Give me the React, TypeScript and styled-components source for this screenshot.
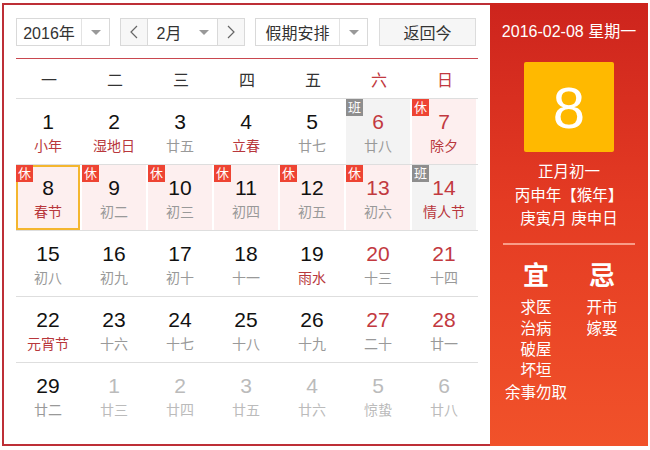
import styled, { createGlobalStyle } from "styled-components";

const GlobalStyle = createGlobalStyle`
    html, body {
        margin: 0;
        padding: 0;
        background: #fff;
        font-family: "Liberation Sans", "Noto Sans CJK SC", sans-serif;
    }
`;

const Frame = styled.div`
    margin: 3px 0 0 2px;
    width: 646px;
    height: 443px;
    box-sizing: border-box;
    border: 2px solid #bd2f36;
    border-right: none;
    display: flex;
`;

const Main = styled.div`
    width: 486px;
    box-sizing: border-box;
    padding: 13px 13px 0 12px;
`;

const Toolbar = styled.div`
    display: flex;
    height: 28px;
    gap: 10px;
    margin-bottom: 12px;
`;

const SelectBox = styled.div<{ $w: number }>`
    width: ${(p) => p.$w}px;
    height: 28px;
    box-sizing: border-box;
    border: 1px solid #d9d9d9;
    background: #fff;
    display: flex;
    align-items: center;
    font-size: 16px;
    color: #333;
`;

const SelectText = styled.div`
    flex: 1;
    text-align: center;
`;

const ArrowPart = styled.div<{ $plain?: boolean }>`
    width: 27px;
    height: 100%;
    border-left: ${(p) => (p.$plain ? "none" : "1px solid #e3e3e3")};
    display: flex;
    align-items: center;
    justify-content: center;
    &::after {
        content: "";
        border-left: 5px solid transparent;
        border-right: 5px solid transparent;
        border-top: 5px solid #999;
    }
`;

const MonthGroup = styled.div`
    display: flex;
    width: 125px;
    height: 28px;
    box-sizing: border-box;
    border: 1px solid #d9d9d9;
`;

const StepBtn = styled.div`
    width: 26px;
    background: #f7f7f7;
    display: flex;
    align-items: center;
    justify-content: center;
    border-color: #d9d9d9;
    border-style: solid;
    border-width: 0;
    &:first-child { border-right-width: 1px; }
    &:last-child { border-left-width: 1px; }
`;

const MonthPart = styled.div`
    flex: 1;
    display: flex;
    align-items: center;
    font-size: 16px;
    color: #333;
`;

const TodayBtn = styled.div`
    margin-left: 1px;
    width: 97px;
    height: 28px;
    box-sizing: border-box;
    border: 1px solid #dcdcdc;
    background: #f6f6f6;
    display: flex;
    align-items: center;
    justify-content: center;
    font-size: 16px;
    color: #333;
`;

const Table = styled.div`
    width: 462px;
    border-top: 1px solid #c9474f;
`;

const WeekRow = styled.div`
    display: grid;
    grid-template-columns: repeat(7, 66px);
    height: 39px;
    border-bottom: 1px solid #dedede;
`;

const WeekCell = styled.div<{ $weekend?: boolean }>`
    display: flex;
    align-items: center;
    justify-content: center;
    font-size: 16px;
    color: ${(p) => (p.$weekend ? "#c2393f" : "#333")};
`;

const Row = styled.div<{ $last?: boolean }>`
    display: grid;
    grid-template-columns: repeat(7, 66px);
    height: 65px;
    border-bottom: 1px solid ${(p) => (p.$last ? "transparent" : "#dedede")};
`;

type Kind = "normal" | "rest" | "work";

const Cell = styled.div<{ $kind: Kind; $selected?: boolean }>`
    position: relative;
    box-sizing: border-box;
    margin-right: 2px;
    padding-top: ${(p) => (p.$selected ? 9 : 11)}px;
    text-align: center;
    background: ${(p) =>
        p.$kind === "rest" ? "#fdefef" : p.$kind === "work" ? "#f3f3f3" : "#fff"};
    border: ${(p) => (p.$selected ? "2px solid #f4b62f" : "none")};
`;

const DayNum = styled.div<{ $color: string }>`
    font-size: 21px;
    line-height: 24px;
    color: ${(p) => p.$color};
`;

const Lunar = styled.div<{ $color: string }>`
    font-size: 14px;
    line-height: 24px;
    color: ${(p) => p.$color};
`;

const Badge = styled.span<{ $work?: boolean; $inSelected?: boolean }>`
    position: absolute;
    top: ${(p) => (p.$inSelected ? -2 : 0)}px;
    left: ${(p) => (p.$inSelected ? -2 : 0)}px;
    width: 17px;
    height: 17px;
    line-height: 17px;
    font-size: 13px;
    text-align: center;
    color: #fff;
    background: ${(p) => (p.$work ? "#8e8e8e" : "#ee4433")};
`;

const Side = styled.div`
    width: 158px;
    margin-top: -2px;
    margin-bottom: -2px;
    background: linear-gradient(180deg, #cd241d 0%, #e43b23 45%, #f1522a 100%);
    color: #fff;
    display: flex;
    flex-direction: column;
    align-items: center;
`;

const SideDate = styled.div`
    margin-top: 19px;
    font-size: 16px;
    line-height: 20px;
    white-space: nowrap;
`;

const BigDay = styled.div`
    margin-top: 20px;
    width: 90px;
    height: 90px;
    border-radius: 2px;
    background: #ffb900;
    display: flex;
    align-items: center;
    justify-content: center;
    font-size: 58px;
`;

const LunarInfo = styled.div`
    margin-top: 8px;
    font-size: 15.5px;
    line-height: 23.5px;
    text-align: center;
    white-space: nowrap;
`;

const Divider = styled.div`
    margin-top: 12px;
    width: 132px;
    height: 2px;
    background: rgba(255, 190, 170, 0.75);
`;

const Almanac = styled.div`
    margin-top: 14px;
    width: 132px;
    display: grid;
    grid-template-columns: 1fr 1fr;
`;

const AlmanacCol = styled.div`
    display: flex;
    flex-direction: column;
    align-items: center;
`;

const AlmanacHead = styled.div`
    font-size: 26px;
    line-height: 34px;
    font-weight: bold;
    margin-bottom: 4px;
`;

const AlmanacItem = styled.div`
    font-size: 15.5px;
    line-height: 21.3px;
    white-space: nowrap;
`;

type Day = {
    n: number;
    l: string;
    fest?: boolean;
    badge?: "rest" | "work";
    other?: boolean;
    sel?: boolean;
};

const weeks: Day[][] = [
    [
        { n: 1, l: "小年", fest: true },
        { n: 2, l: "湿地日", fest: true },
        { n: 3, l: "廿五" },
        { n: 4, l: "立春", fest: true },
        { n: 5, l: "廿七" },
        { n: 6, l: "廿八", badge: "work" },
        { n: 7, l: "除夕", fest: true, badge: "rest" },
    ],
    [
        { n: 8, l: "春节", fest: true, badge: "rest", sel: true },
        { n: 9, l: "初二", badge: "rest" },
        { n: 10, l: "初三", badge: "rest" },
        { n: 11, l: "初四", badge: "rest" },
        { n: 12, l: "初五", badge: "rest" },
        { n: 13, l: "初六", badge: "rest" },
        { n: 14, l: "情人节", fest: true, badge: "work" },
    ],
    [
        { n: 15, l: "初八" },
        { n: 16, l: "初九" },
        { n: 17, l: "初十" },
        { n: 18, l: "十一" },
        { n: 19, l: "雨水", fest: true },
        { n: 20, l: "十三" },
        { n: 21, l: "十四" },
    ],
    [
        { n: 22, l: "元宵节", fest: true },
        { n: 23, l: "十六" },
        { n: 24, l: "十七" },
        { n: 25, l: "十八" },
        { n: 26, l: "十九" },
        { n: 27, l: "二十" },
        { n: 28, l: "廿一" },
    ],
    [
        { n: 29, l: "廿二" },
        { n: 1, l: "廿三", other: true },
        { n: 2, l: "廿四", other: true },
        { n: 3, l: "廿五", other: true },
        { n: 4, l: "廿六", other: true },
        { n: 5, l: "惊蛰", other: true },
        { n: 6, l: "廿八", other: true },
    ],
];

const weekNames = ["一", "二", "三", "四", "五", "六", "日"];

const Chevron = ({ dir }: { dir: "l" | "r" }) => (
    <svg width="8" height="14" viewBox="0 0 8 14">
        <path
            d={dir === "l" ? "M7 1 L1 7 L7 13" : "M1 1 L7 7 L1 13"}
            fill="none"
            stroke="#666"
            strokeWidth="1.2"
        />
    </svg>
);

const App = () => {
    return (
        <>
            <GlobalStyle />
            <Frame>
                <Main>
                    <Toolbar>
                        <SelectBox $w={94}>
                            <SelectText>2016年</SelectText>
                            <ArrowPart />
                        </SelectBox>
                        <MonthGroup>
                            <StepBtn><Chevron dir="l" /></StepBtn>
                            <MonthPart>
                                <SelectText>2月</SelectText>
                                <ArrowPart $plain />
                            </MonthPart>
                            <StepBtn><Chevron dir="r" /></StepBtn>
                        </MonthGroup>
                        <SelectBox $w={113}>
                            <SelectText>假期安排</SelectText>
                            <ArrowPart />
                        </SelectBox>
                        <TodayBtn>返回今</TodayBtn>
                    </Toolbar>
                    <Table>
                        <WeekRow>
                            {weekNames.map((w, i) => (
                                <WeekCell key={w} $weekend={i >= 5}>{w}</WeekCell>
                            ))}
                        </WeekRow>
                        {weeks.map((week, wi) => (
                            <Row key={wi} $last={wi === weeks.length - 1}>
                                {week.map((d, di) => {
                                    const numColor = d.other
                                        ? "#bbb"
                                        : di >= 5
                                        ? "#c2393f"
                                        : "#111";
                                    const lunarColor = d.other
                                        ? "#bbb"
                                        : d.fest
                                        ? "#b8373c"
                                        : "#999";
                                    return (
                                        <Cell
                                            key={di}
                                            $kind={d.badge ?? "normal"}
                                            $selected={d.sel}
                                        >
                                            {d.badge && (
                                                <Badge
                                                    $work={d.badge === "work"}
                                                    $inSelected={d.sel}
                                                >
                                                    {d.badge === "work" ? "班" : "休"}
                                                </Badge>
                                            )}
                                            <DayNum $color={numColor}>{d.n}</DayNum>
                                            <Lunar $color={lunarColor}>{d.l}</Lunar>
                                        </Cell>
                                    );
                                })}
                            </Row>
                        ))}
                    </Table>
                </Main>
                <Side>
                    <SideDate>2016-02-08 星期一</SideDate>
                    <BigDay>8</BigDay>
                    <LunarInfo>
                        正月初一
                        <br />
                        丙申年【猴年】
                        <br />
                        庚寅月 庚申日
                    </LunarInfo>
                    <Divider />
                    <Almanac>
                        <AlmanacCol>
                            <AlmanacHead>宜</AlmanacHead>
                            <AlmanacItem>求医</AlmanacItem>
                            <AlmanacItem>治病</AlmanacItem>
                            <AlmanacItem>破屋</AlmanacItem>
                            <AlmanacItem>坏垣</AlmanacItem>
                            <AlmanacItem>余事勿取</AlmanacItem>
                        </AlmanacCol>
                        <AlmanacCol>
                            <AlmanacHead>忌</AlmanacHead>
                            <AlmanacItem>开市</AlmanacItem>
                            <AlmanacItem>嫁娶</AlmanacItem>
                        </AlmanacCol>
                    </Almanac>
                </Side>
            </Frame>
        </>
    );
};

export default App;
